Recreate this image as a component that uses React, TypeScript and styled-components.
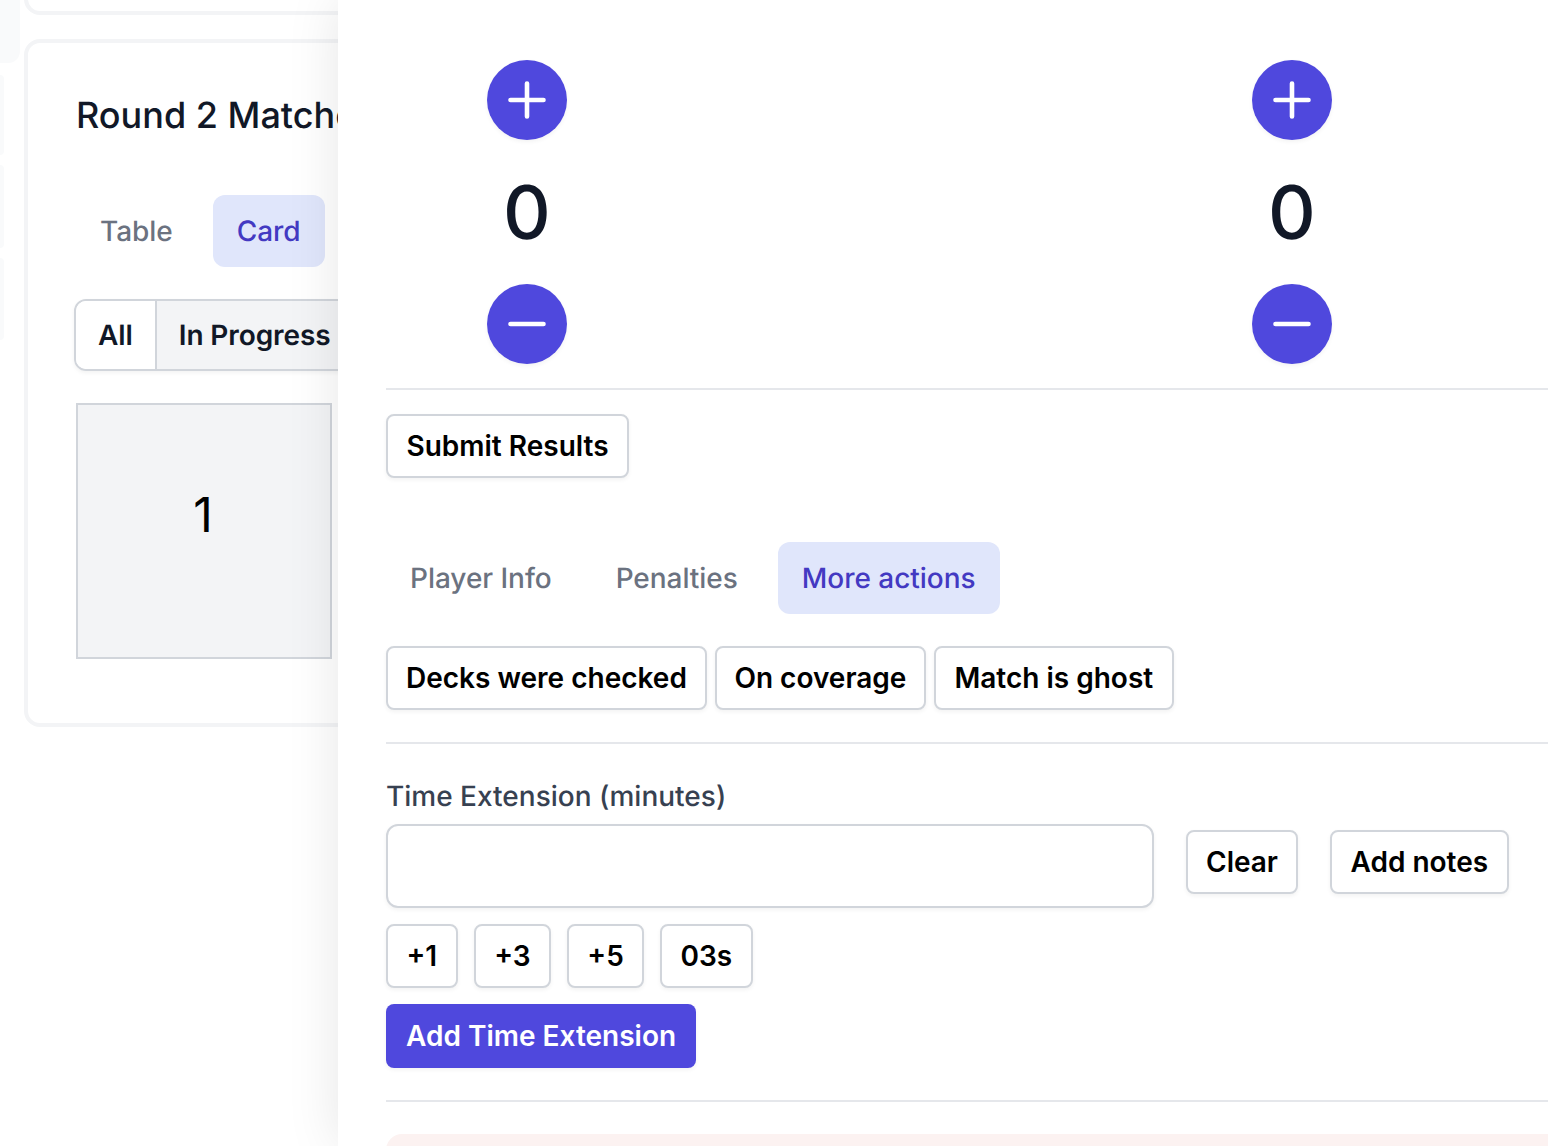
import React from "react";
import styled, { createGlobalStyle } from "styled-components";

const Global = createGlobalStyle`
  html, body { margin: 0; padding: 0; background: #fff; }
  body { font-family: Inter, "Liberation Sans", sans-serif; text-rendering: geometricPrecision; }
  * { box-sizing: border-box; }
`;

const Page = styled.div`
  position: relative;
  width: 1548px;
  height: 1146px;
  overflow: hidden;
  background: #fff;
  display: flex;
  align-items: flex-start;
`;

const Sidebar = styled.nav`
  width: 24px;
  flex: none;
  display: flex;
  flex-direction: column;
  margin-top: -20px;
`;

const NavItem = styled.div<{ $active?: boolean; $h: number }>`
  width: ${(p) => (p.$active ? 20 : 4)}px;
  height: ${(p) => p.$h}px;
  margin-bottom: ${(p) => (p.$active ? 12 : 10)}px;
  background: #f9fafb;
  border-radius: 0 12px 12px 0;
`;

const Main = styled.main`
  flex: 1;
  display: flex;
  flex-direction: column;
  gap: 24px;
  margin-top: -60px;
`;

const PrevCard = styled.div`
  height: 75px;
  border: 4px solid #f3f4f6;
  border-radius: 16px;
  background: #fff;
`;

const Card = styled.section`
  height: 688px;
  border: 4px solid #f3f4f6;
  border-radius: 16px;
  background: #fff;
  padding: 50px 48px 0;
  overflow: hidden;
`;

const Title = styled.h2`
  margin: 0 0 58px;
  font-size: 36px;
  line-height: 44px;
  font-weight: 500;
  color: #111827;
  white-space: nowrap;
`;

const Tabs = styled.div`
  display: flex;
  gap: 16px;
`;

const Tab = styled.div<{ $active?: boolean }>`
  height: 72px;
  padding: 0 24px;
  display: flex;
  align-items: center;
  font-size: 28px;
  font-weight: 500;
  letter-spacing: -0.04px;
  border-radius: 12px;
  white-space: nowrap;
  color: ${(p) => (p.$active ? "#4339c2" : "#6b7280")};
  background: ${(p) => (p.$active ? "#e0e6fb" : "transparent")};
`;

const Segments = styled.div`
  display: flex;
  width: max-content;
  height: 72px;
  margin: 32px 0;
  margin-left: -2px;
  border: 2px solid #d1d5db;
  border-radius: 12px;
  box-shadow: 0 2px 4px rgba(0, 0, 0, 0.05);
  overflow: hidden;
`;

const Segment = styled.div<{ $active?: boolean }>`
  padding: 0 22px;
  display: flex;
  align-items: center;
  font-size: 28px;
  font-weight: 600;
  letter-spacing: -0.1px;
  color: #111827;
  white-space: nowrap;
  background: ${(p) => (p.$active ? "#fff" : "#f3f4f6")};
  border-right: 2px solid #d1d5db;
`;

const TableTile = styled.div`
  width: 256px;
  height: 256px;
  border: 2px solid #d1d5db;
  background: #f3f4f6;
  display: flex;
  align-items: center;
  justify-content: center;
  font-size: 48px;
  color: #000;
  padding: 0 2px 34px 0;
`;

const Drawer = styled.aside`
  position: absolute;
  top: 0;
  right: 0;
  bottom: 0;
  left: 338px;
  background: #fff;
  padding: 60px 0 0 48px;
  box-shadow: 0 0 50px rgba(0, 0, 0, 0.1);
  overflow: hidden;
`;

const Scores = styled.div`
  display: flex;
  gap: 685px;
  padding: 0 0 24px 101px;
  border-bottom: 2px solid #e5e7eb;
`;

const ScoreCol = styled.div`
  width: 80px;
  display: flex;
  flex-direction: column;
  align-items: center;
`;

const RoundButton = styled.button`
  width: 80px;
  height: 80px;
  padding: 0;
  border: 0;
  border-radius: 50%;
  background: #4f48dd;
  display: flex;
  align-items: center;
  justify-content: center;
  box-shadow: 0 2px 4px rgba(0, 0, 0, 0.05);
`;

const Score = styled.div`
  height: 144px;
  display: flex;
  align-items: center;
  justify-content: center;
  font-size: 74px;
  font-weight: 500;
  color: #111827;
`;

const Button = styled.button<{ $primary?: boolean; $pad?: number }>`
  height: 64px;
  padding: 0 ${(p) => p.$pad ?? (p.$primary ? 20 : 18)}px;
  border-radius: 8px;
  border: ${(p) => (p.$primary ? "0" : "2px solid #d1d5db")};
  background: ${(p) => (p.$primary ? "#4f48dd" : "#fff")};
  color: ${(p) => (p.$primary ? "#fff" : "#000")};
  font-family: inherit;
  font-size: 28px;
  font-weight: 600;
  white-space: nowrap;
  flex: none;
  box-shadow: 0 2px 4px rgba(0, 0, 0, 0.05);
`;

const SubmitRow = styled.div`
  margin-top: 24px;
  display: flex;
`;

const DrawerTabs = styled(Tabs)`
  margin-top: 64px;
`;

const ActionRow = styled.div`
  display: flex;
  gap: 8px;
  margin-top: 32px;
  padding-bottom: 32px;
  border-bottom: 2px solid #e5e7eb;
`;

const FieldLabel = styled.label`
  display: block;
  margin-top: 32px;
  height: 48px;
  font-size: 28px;
  line-height: 40px;
  font-weight: 500;
  color: #374151;
`;

const FieldRow = styled.div`
  display: flex;
  align-items: flex-start;
  gap: 32px;
  height: 84px;
`;

const TextInput = styled.input`
  width: 768px;
  height: 84px;
  flex: none;
  border: 2px solid #d1d5db;
  border-radius: 12px;
  background: #fff;
  box-shadow: 0 2px 4px rgba(0, 0, 0, 0.05);
`;

const FieldButton = styled(Button)`
  margin-top: 6px;
`;

const PresetRow = styled.div`
  display: flex;
  gap: 16px;
  margin-top: 16px;
`;

const SubmitExt = styled.div`
  display: flex;
  margin-top: 16px;
  padding-bottom: 32px;
  border-bottom: 2px solid #e5e7eb;
`;

const Danger = styled.div`
  margin-top: 32px;
  height: 80px;
  border-radius: 16px 0 0 16px;
  background: #fcf2f1;
`;

const PlusIcon = () => (
  <svg width="40" height="40" viewBox="0 0 40 40" fill="none" stroke="#fff" strokeWidth="4.6" strokeLinecap="round">
    <path d="M20 3.5v33M3.5 20h33" />
  </svg>
);

const MinusIcon = () => (
  <svg width="40" height="40" viewBox="0 0 40 40" fill="none" stroke="#fff" strokeWidth="4.6" strokeLinecap="round">
    <path d="M3.5 20h33" />
  </svg>
);

const ScoreColumn = () => (
  <ScoreCol>
    <RoundButton aria-label="increase"><PlusIcon /></RoundButton>
    <Score>0</Score>
    <RoundButton aria-label="decrease"><MinusIcon /></RoundButton>
  </ScoreCol>
);

export default function App() {
  return (
    <Page>
      <Global />
      <Sidebar>
        <NavItem $active $h={83} />
        <NavItem $h={80} />
        <NavItem $h={83} />
        <NavItem $h={82} />
      </Sidebar>
      <Main>
        <PrevCard />
        <Card>
          <Title>Round 2 Matches</Title>
          <Tabs>
            <Tab>Table</Tab>
            <Tab $active>Card</Tab>
          </Tabs>
          <Segments>
            <Segment $active>All</Segment>
            <Segment>In Progress</Segment>
            <Segment>Completed</Segment>
          </Segments>
          <TableTile>1</TableTile>
        </Card>
      </Main>
      <Drawer>
        <Scores>
          <ScoreColumn />
          <ScoreColumn />
        </Scores>
        <SubmitRow>
          <Button $pad={18.5}>Submit Results</Button>
        </SubmitRow>
        <DrawerTabs>
          <Tab>Player Info</Tab>
          <Tab>Penalties</Tab>
          <Tab $active>More actions</Tab>
        </DrawerTabs>
        <ActionRow>
          <Button>Decks were checked</Button>
          <Button $pad={17.5}>On coverage</Button>
          <Button $pad={18.5}>Match is ghost</Button>
        </ActionRow>
        <FieldLabel>Time Extension (minutes)</FieldLabel>
        <FieldRow>
          <TextInput />
          <FieldButton>Clear</FieldButton>
          <FieldButton $pad={18.5}>Add notes</FieldButton>
        </FieldRow>
        <PresetRow>
          <Button $pad={18.5}>+1</Button>
          <Button $pad={18.5}>+3</Button>
          <Button $pad={18.2}>+5</Button>
          <Button $pad={18.5}>03s</Button>
        </PresetRow>
        <SubmitExt>
          <Button $primary>Add Time Extension</Button>
        </SubmitExt>
        <Danger />
      </Drawer>
    </Page>
  );
}
